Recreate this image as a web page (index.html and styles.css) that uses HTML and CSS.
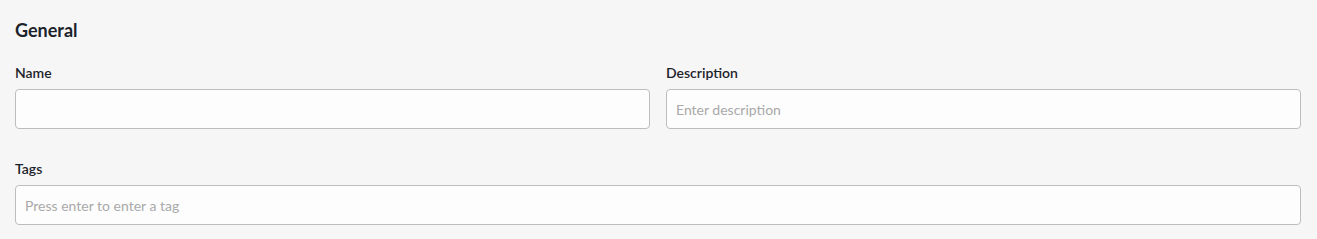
FILE: index.html
```html
<!DOCTYPE html>
<html lang="en">
<head>
  <meta charset="UTF-8">
  <title>General</title>
  <link rel="stylesheet" href="styles.css">
</head>
<body>
  <!-- GENERAL SECTION -->
  <div class="secao-geral">
    <h2>General</h2>
    <div class="linha-campos">
      <div class="campo">
        <label for="name">Name</label>
        <input type="text" id="name" name="name">
      </div>
      <div class="campo">
        <label for="description">Description</label>
        <input type="text" id="description" name="description" placeholder="Enter description">
      </div>
    </div>
    <div class="campo">
      <label for="tags">Tags</label>
      <input type="text" id="tags" name="tags" placeholder="Press enter to enter a tag">
    </div>
  </div>
</body>
</html>
```

FILE: styles.css
```css
body {
  font-family: 'Lato', 'Liberation Sans', sans-serif;
  background-color: #f6f6f6;
  margin: 0;
  padding: 0;
}

.secao-geral {
  padding: 19px 16px 0 15px;
}

.secao-geral h2 {
  font-size: 18px;
  font-weight: bold;
  color: #1d232b;
  margin: 0 0 23px 0;
  line-height: 22px;
}

.linha-campos {
  display: flex;
  gap: 16px;
  margin-bottom: 31px;
}

.campo {
  display: flex;
  flex-direction: column;
  flex: 1;
}

.campo label {
  font-size: 14px;
  font-weight: 600;
  color: #1d232b;
  line-height: 17px;
  margin-bottom: 8px;
}

.campo input {
  height: 40px;
  box-sizing: border-box;
  border: 1px solid #bdbdbd;
  border-radius: 4px;
  background-color: #fdfdfd;
  padding: 0 9px;
  font-family: 'Lato', 'Liberation Sans', sans-serif;
  font-size: 14px;
  color: #333;
}

.campo input::placeholder {
  color: #a9a9a9;
}
```
